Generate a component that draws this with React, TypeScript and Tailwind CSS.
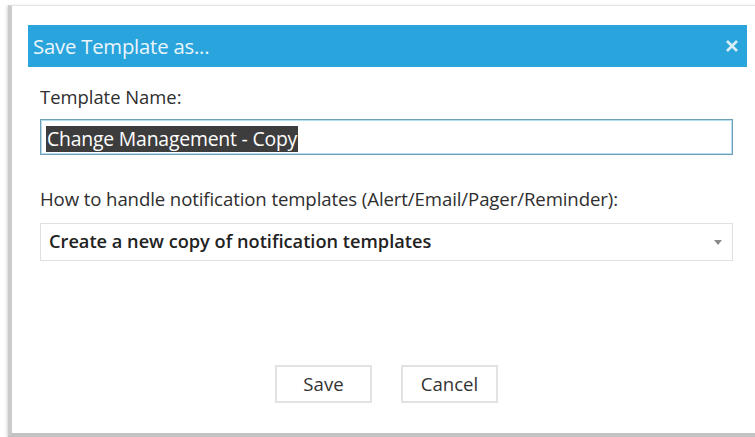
export default function App() {
  return (
    <div className="w-[755px] h-[437px] overflow-hidden bg-white font-['Open_Sans',sans-serif]">
      <div className="pt-[5px] pl-[8px]">
        {/* Dialog window */}
        <div className="w-[770px] h-[432px] bg-white border-t border-t-[#e6e6e6] border-l-[4px] border-l-[#cbcbcb] border-b-[4px] border-b-[#c2c2c2] shadow-[-1px_1px_3px_rgba(0,0,0,0.18)] pl-[16px] pt-[19px]">
          <div className="w-[719px]">
            {/* Title bar */}
            <div className="h-[42px] bg-[#2aa4dc] flex items-center justify-between pl-[5px] pr-[7px]">
              <span className="text-[20.3px] text-[#eaf6fc] tracking-[-0.2px]">Save Template as...</span>
              <svg width="14" height="14" viewBox="0 0 14 14" className="mr-[1px]">
                <path d="M2 2 L12 12 M12 2 L2 12" stroke="#d8eef9" strokeWidth="2.6" strokeLinecap="butt" />
              </svg>
            </div>

            <div className="pl-[12px] pr-[14px]">
              <div className="mt-[19px] text-[18.4px] leading-[22px] text-[#2e2e2e]">Template Name:</div>

              {/* Name input */}
              <div className="mt-[11px] h-[36px] border border-[#6f9fb3] shadow-[inset_0_0_0_1px_#b3dff0] flex items-center pl-[5px] pt-[3px]">
                <span className="bg-[#3d3d3d] text-white text-[19.4px] leading-[26px] px-[1px] tracking-[-0.2px]">Change Management - Copy</span>
              </div>

              <div className="mt-[33px] text-[18.6px] leading-[22px] text-[#2e2e2e] tracking-[-0.1px]">
                How to handle notification templates (Alert/Email/Pager/Reminder):
              </div>

              {/* Notification handling select */}
              <div className="mt-[13px] h-[38px] border border-[#e0e0e0] flex items-center justify-between pl-[8px] pr-[10px]">
                <span className="text-[18.2px] font-semibold text-[#222]">Create a new copy of notification templates</span>
                <svg width="8" height="5" viewBox="0 0 8 5">
                  <path d="M0 0 H8 L4 5 Z" fill="#8a8a8a" />
                </svg>
              </div>

              {/* Actions */}
              <div className="mt-[104px] flex justify-center gap-[29px]">
                <button className="w-[97px] h-[38px] border-2 border-[#e2e2e2] bg-white text-[18.6px] text-[#333]">Save</button>
                <button className="w-[97px] h-[38px] border-2 border-[#e2e2e2] bg-white text-[18.6px] text-[#333]">Cancel</button>
              </div>
            </div>
          </div>
        </div>
      </div>
    </div>
  );
}
